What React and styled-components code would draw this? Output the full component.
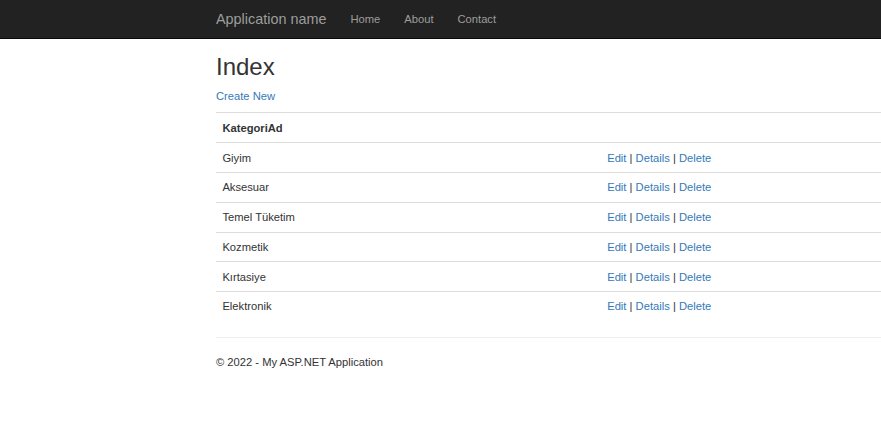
import React from "react";
import styled, { createGlobalStyle } from "styled-components";

const GlobalStyle = createGlobalStyle`
  html, body {
    margin: 0;
    padding: 0;
    background: #fff;
  }
  body {
    font-family: "Liberation Sans", Arial, sans-serif;
    font-size: 11.2px;
    line-height: 16px;
    color: #333;
    overflow: hidden;
  }
`;

const Navbar = styled.nav`
  height: 38px;
  background: #222;
  border-bottom: 1px solid #080808;
`;

const NavInner = styled.div`
  margin-left: 201px;
  padding-left: 15px;
  height: 100%;
  display: flex;
  align-items: center;
`;

const Brand = styled.a`
  color: #9d9d9d;
  font-size: 14.4px;
  line-height: 18px;
  padding-right: 12px;
  text-decoration: none;
  margin-top: -1px;
`;

const NavLink = styled.a`
  color: #9d9d9d;
  font-size: 11.2px;
  line-height: 16px;
  padding: 0 12px;
  text-decoration: none;
`;

const Body = styled.div`
  margin-left: 201px;
  padding-left: 15px;
`;

const Title = styled.h2`
  font-family: "Liberation Sans", Arial, sans-serif;
  font-weight: 500;
  font-size: 24px;
  line-height: 26.4px;
  margin: 15px 0 8px;
  color: #333;
`;

const Para = styled.p`
  margin: 0 0 8px;
`;

const Link = styled.a`
  color: #337ab7;
  text-decoration: none;
`;

const Table = styled.table`
  width: 100%;
  border-collapse: collapse;
  border-spacing: 0;
  margin-bottom: 16px;
`;

const Cell = styled.td`
  padding: 6.4px;
  line-height: 16px;
  border-top: 1px solid #ddd;
  text-align: left;
  vertical-align: top;
  font-weight: ${(p) => (p.$head ? 700 : 400)};
  width: ${(p) => (p.$first ? "372px" : "auto")};
`;

const Rule = styled.hr`
  margin: 0 0 16px;
  border: 0;
  border-top: 1px solid #eee;
`;

const FooterText = styled.p`
  margin: 0;
`;

const rows = ["Giyim", "Aksesuar", "Temel Tüketim", "Kozmetik", "Kırtasiye", "Elektronik"];

export default function App() {
  return (
    <>
      <GlobalStyle />
      <Navbar>
        <NavInner>
          <Brand href="#">Application name</Brand>
          <NavLink href="#">Home</NavLink>
          <NavLink href="#">About</NavLink>
          <NavLink href="#">Contact</NavLink>
        </NavInner>
      </Navbar>
      <Body>
        <Title>Index</Title>
        <Para>
          <Link href="#">Create New</Link>
        </Para>
        <Table>
          <tbody>
            <tr>
              <Cell as="th" $head $first>KategoriAd</Cell>
              <Cell as="th" $head></Cell>
            </tr>
            {rows.map((r) => (
              <tr key={r}>
                <Cell $first>{r}</Cell>
                <Cell>
                  <Link href="#">Edit</Link> | <Link href="#">Details</Link> |{" "}
                  <Link href="#">Delete</Link>
                </Cell>
              </tr>
            ))}
          </tbody>
        </Table>
        <Rule />
        <footer>
          <FooterText>© 2022 - My ASP.NET Application</FooterText>
        </footer>
      </Body>
    </>
  );
}
